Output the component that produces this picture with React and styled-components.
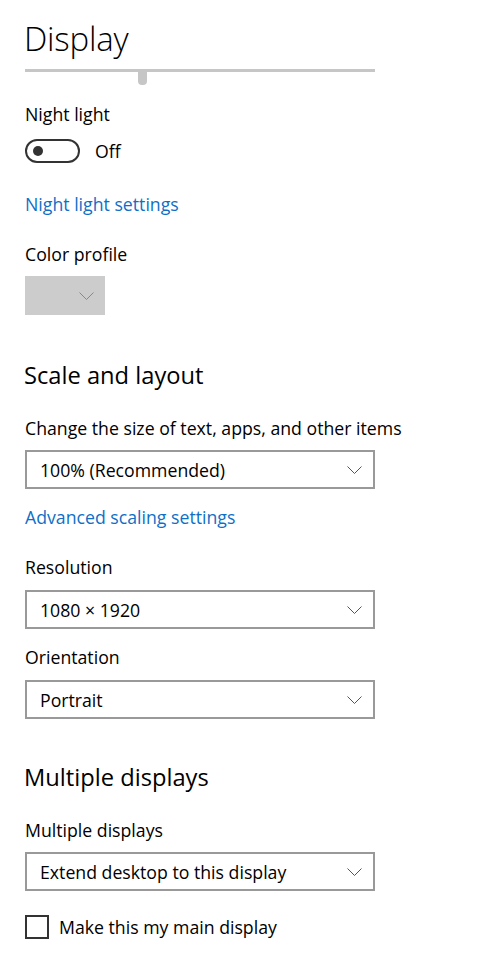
import React from "react";
import styled, { createGlobalStyle } from "styled-components";

const GlobalStyle = createGlobalStyle`
  html, body {
    margin: 0;
    padding: 0;
    background: #ffffff;
  }
  body {
    font-family: "Open Sans", "Noto Sans", "Liberation Sans", sans-serif;
    color: #000000;
  }
`;

const Page = styled.div`
  width: 501px;
  min-height: 974px;
  padding: 17px 0 0 25px;
  box-sizing: border-box;
`;

const Title = styled.h1`
  margin: 0 0 0 -1px;
  font-size: 33px;
  font-weight: 300;
  line-height: 44px;
  letter-spacing: -0.2px;
`;

const SliderWrap = styled.div`
  position: relative;
  width: 350px;
  height: 22px;
  margin-top: 8px;
`;

const Track = styled.div`
  height: 3px;
  background: #c6c6c6;
`;

const Thumb = styled.div`
  position: absolute;
  left: 113px;
  top: 0;
  width: 9px;
  height: 16px;
  background: #c6c6c6;
  border-radius: 0 0 4px 4px;
`;

const Label = styled.div`
  margin-top: ${({ $mt }) => $mt}px;
  font-size: 17.7px;
  line-height: 24px;
`;

const Heading = styled.h2`
  margin: ${({ $mt }) => $mt}px 0 0 -1px;
  font-size: 23.7px;
  font-weight: 400;
  line-height: 32px;
`;

const Link = styled.a`
  display: block;
  margin-top: ${({ $mt }) => $mt}px;
  font-size: 17.7px;
  line-height: 24px;
  color: #0f6fc6;
  text-decoration: none;
`;

const ToggleRow = styled.div`
  display: flex;
  align-items: center;
  gap: 15px;
  margin-top: 13px;
`;

const Toggle = styled.div`
  width: 55px;
  height: 24px;
  box-sizing: border-box;
  border: 2px solid #333333;
  border-radius: 12px;
  display: flex;
  align-items: center;
  padding-left: 6px;
`;

const Knob = styled.div`
  width: 10px;
  height: 10px;
  border-radius: 50%;
  background: #333333;
`;

const ToggleText = styled.span`
  font-size: 17.7px;
`;

const GrayBox = styled.div`
  margin-top: 10px;
  width: 80px;
  height: 39px;
  background: #cccccc;
  display: flex;
  align-items: center;
  justify-content: flex-end;
  padding-right: 11px;
  box-sizing: border-box;
`;

const Select = styled.div`
  margin-top: ${({ $mt }) => $mt}px;
  width: 350px;
  height: 39px;
  box-sizing: border-box;
  border: 2px solid #999999;
  display: flex;
  align-items: center;
  justify-content: space-between;
  padding: 0 11px 0 13px;
  font-size: 17.7px;
`;

const CheckRow = styled.div`
  display: flex;
  align-items: center;
  gap: 10px;
  margin-top: 24px;
  font-size: 17.7px;
`;

const Box = styled.div`
  width: 24px;
  height: 24px;
  box-sizing: border-box;
  border: 2px solid #333333;
`;

function Chevron({ color = "#555" }) {
  return (
    <svg width="15" height="8" viewBox="0 0 15 8">
      <path d="M0.5 0.5 L7.5 7.5 L14.5 0.5" fill="none" stroke={color} strokeWidth="1" />
    </svg>
  );
}

function Dropdown({ mt, children }) {
  return (
    <Select $mt={mt}>
      <span>{children}</span>
      <Chevron />
    </Select>
  );
}

export default function App() {
  return (
    <>
      <GlobalStyle />
      <Page>
        <Title>Display</Title>
        <SliderWrap>
          <Track />
          <Thumb />
        </SliderWrap>

        <Label $mt={11}>Night light</Label>
        <ToggleRow>
          <Toggle>
            <Knob />
          </Toggle>
          <ToggleText>Off</ToggleText>
        </ToggleRow>
        <Link $mt={29}>Night light settings</Link>

        <Label $mt={26}>Color profile</Label>
        <GrayBox>
          <Chevron color="#888" />
        </GrayBox>

        <Heading $mt={44}>Scale and layout</Heading>
        <Label $mt={25}>Change the size of text, apps, and other items</Label>
        <Dropdown mt={10}>100% (Recommended)</Dropdown>
        <Link $mt={16}>Advanced scaling settings</Link>

        <Label $mt={26}>Resolution</Label>
        <Dropdown mt={11}>1080 × 1920</Dropdown>
        <Label $mt={16}>Orientation</Label>
        <Dropdown mt={11}>Portrait</Dropdown>

        <Heading $mt={42}>Multiple displays</Heading>
        <Label $mt={25}>Multiple displays</Label>
        <Dropdown mt={10}>Extend desktop to this display</Dropdown>
        <CheckRow>
          <Box />
          <span>Make this my main display</span>
        </CheckRow>
      </Page>
    </>
  );
}
